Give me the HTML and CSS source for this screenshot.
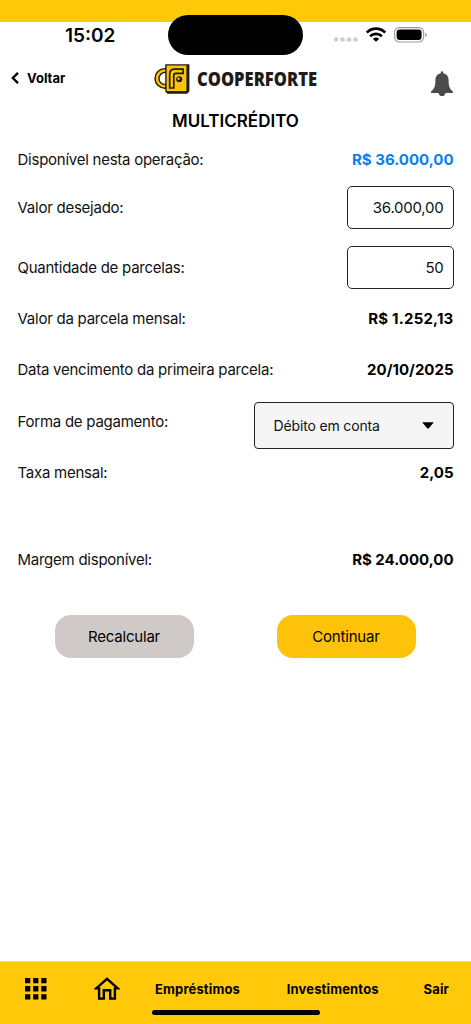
FILE: index.html
```html
<!DOCTYPE html>
<html lang="pt-BR">
<head>
<meta charset="utf-8">
<title>Multicrédito</title>
<link rel="stylesheet" href="styles.css">
</head>
<body>
<div class="app">
  <div class="status">
    <span class="island"></span>
    <span class="clock">15:02</span>
    <span class="indicators">
      <svg class="dots" width="24" height="5" viewBox="0 0 24 5" fill="#ccc"><rect x="0" y=".4" width="4.2" height="4.2" rx="1.4"/><rect x="6.5" y=".4" width="4.2" height="4.2" rx="1.4"/><rect x="12.9" y=".4" width="4.2" height="4.2" rx="1.4"/><rect x="19.4" y=".4" width="4.2" height="4.2" rx="1.4"/></svg>
      <svg class="wifi" width="20" height="15" viewBox="0 0 20 15" fill="none" stroke="#000" stroke-width="2.7"><path d="M.8 5.6C6 .4 14 .4 19.2 5.6"/><path d="M4.1 9.2C7.4 6 12.6 6 15.9 9.2"/><path d="M6.8 11.7Q10 9.2 13.2 11.7L10 14.8Z" fill="#000" stroke="none"/></svg>
      <svg class="battery" width="34" height="16" viewBox="0 0 34 16"><rect x=".6" y=".6" width="29" height="14.4" rx="4.8" fill="#fff" stroke="#999" stroke-width="1.1"/><rect x="2.6" y="2.6" width="25" height="10.4" rx="3.2"/><path d="M31 5.5q1.8.6 1.8 2.3t-1.8 2.3z" fill="#aaa"/></svg>
    </span>
  </div>

  <header class="header">
    <a class="back"><svg width="8" height="12" viewBox="0 0 8 12" fill="none" stroke="#000" stroke-width="2.4"><path d="M7 .8L1.8 6 7 11.2"/></svg>Voltar</a>
    <div class="brand">
      <svg width="36" height="31" viewBox="0 0 36 31">
        <path d="M12 4.6h-1.2a9.8 9.8 0 0 0 0 19.6H12v-3.8h-1a6 6 0 0 1 0-12h1z" fill="#fdc500" stroke="#211b18" stroke-width="1.4"/>
        <path d="M11.2.3h24.2v27l-2.2 2.5H13.5l-2.3-2.2z" fill="#211b18"/>
        <path d="M12.6 1.5h19.8v25.6H12.6z" fill="#fdc500"/>
        <path d="M15.7 24V10.2q0-5 5-5h8.4v4.1h-7.3q-2 0-2 2V24z" fill="#fdc500" stroke="#211b18" stroke-width="1.7"/>
        <circle cx="25.2" cy="15.2" r="3" fill="#211b18"/><circle cx="24.6" cy="14.8" r="1.2" fill="#fdc500"/>
      </svg>
      <svg class="wordmark" width="128" height="36" viewBox="0 0 128 36"><text class="wordmark-text" x="1" y="24" textLength="120" lengthAdjust="spacingAndGlyphs">COOPERFORTE</text></svg>
    </div>
    <svg class="bell" width="24" height="26" viewBox="0 0 24 26" fill="#4b4b4b"><path d="M12 .3c.7 0 1.2.6 1.2 1.4v.6c3.8.8 5.4 3.4 5.4 7 0 6 1.2 8.8 4.3 11.2.6.5.4 1.4-.5 1.4H1.6c-.9 0-1.1-.9-.5-1.4 3.1-2.4 4.3-5.2 4.3-11.2 0-3.6 1.6-6.2 5.4-7v-.6c0-.8.5-1.4 1.2-1.4z"/><path d="M8.6 21.7h6.8q-.3 3.4-3.4 3.4t-3.4-3.4z"/></svg>
  </header>

  <h1 class="title">MULTICRÉDITO</h1>

  <main class="form">
    <div class="row row-available"><span>Disponível nesta operação:</span><strong class="value highlight">R$ 36.000,00</strong></div>
    <div class="row row-amount"><span>Valor desejado:</span><span class="field">36.000,00</span></div>
    <div class="row row-count"><span>Quantidade de parcelas:</span><span class="field">50</span></div>
    <div class="row row-monthly"><span>Valor da parcela mensal:</span><strong class="value">R$ 1.252,13</strong></div>
    <div class="row row-due"><span>Data vencimento da primeira parcela:</span><strong class="value">20/10/2025</strong></div>
    <div class="row row-payment"><span class="payment-label">Forma de pagamento:</span><span class="select">Débito em conta<svg width="12" height="7" viewBox="0 0 12 7"><path d="M1 .3h10q.8 0 .3.7L7 6q-1 1-2 0L.7 1Q.2.3 1 .3z"/></svg></span></div>
    <div class="row row-rate"><span>Taxa mensal:</span><strong class="value">2,05</strong></div>
    <div class="row row-margin"><span>Margem disponível:</span><strong class="value">R$ 24.000,00</strong></div>
    <div class="actions"><button class="button secondary">Recalcular</button><button class="button primary">Continuar</button></div>
  </main>

  <nav class="nav">
    <svg class="grid-icon" width="22" height="22" viewBox="0 0 22 22"><path d="M0 0h5.3v5.3H0zM8.1 0h5.3v5.3H8.1zM16.2 0h5.3v5.3h-5.3zM0 8.1h5.3v5.3H0zM8.1 8.1h5.3v5.3H8.1zM16.2 8.1h5.3v5.3h-5.3zM0 16.2h5.3v5.3H0zM8.1 16.2h5.3v5.3H8.1zM16.2 16.2h5.3v5.3h-5.3z"/></svg>
    <svg class="home-icon" width="26" height="23" viewBox="0 0 26 23" fill="none" stroke="#000" stroke-width="2.4"><path d="M2.2 11.4L13 1.8l10.8 9.6h-2.9v10.2h-4.7v-8.4H9.8v8.4H5.1V11.4z"/></svg>
    <span class="nav-loans">Empréstimos</span>
    <span class="nav-investments">Investimentos</span>
    <span class="nav-exit">Sair</span>
    <span class="home-indicator"></span>
  </nav>
</div>
</body>
</html>
```
FILE: styles.css
```css
* { box-sizing: border-box; }
body { margin: 0; background: #fff; color: #111; font-family: Inter, "Liberation Sans", sans-serif; font-size: 15px; }
svg { display: block; flex: none; }
.app { width: 471px; height: 1024px; display: flex; flex-direction: column; }
.status { position: relative; height: 57px; border-top: 22px solid #ffc90a; display: flex; align-items: flex-start; justify-content: space-between; padding: 0 43px 0 65px; }
.island { position: absolute; left: 168px; top: -7px; width: 135px; height: 40px; border-radius: 20px; background: #000; }
.clock { font-size: 19px; font-weight: 600; line-height: 28px; color: #000; }
.indicators { display: flex; align-items: flex-start; padding-top: 5px; }
.dots { margin: 10px 8px 0 0; }
.wifi { margin-right: 8px; }
.header { height: 45px; display: flex; align-items: flex-start; padding-left: 11px; }
.back { display: flex; align-items: center; gap: 8px; width: 143px; height: 42px; font-size: 13px; font-weight: 700; color: #000; }
.brand { display: flex; align-items: flex-start; padding-top: 5px; width: 276px; }
.brand > svg:first-child { margin-top: 2px; }
.wordmark { margin-left: 6px; }
.wordmark-text { font-family: "Open Sans", sans-serif; font-size: 19px; font-weight: 800; fill: #211b18; }
.bell { margin-top: 14px; }
.title { margin: 0; height: 39px; line-height: 38px; text-align: center; font-size: 17px; font-weight: 600; color: #000; }
.form { flex: 1; padding: 0 17.5px; letter-spacing: -0.25px; }
.row { display: flex; align-items: center; justify-content: space-between; }
.row-available { height: 37px; padding-bottom: 1px; }
.row-amount { height: 59px; }
.row-count { height: 61px; }
.row-monthly { height: 41px; }
.row-due { height: 62px; padding-bottom: 2px; }
.row-payment { height: 49px; }
.row-rate { height: 46px; padding-bottom: 2px; }
.row-margin { height: 42px; margin-top: 42px; }
.value { font-weight: 700; color: #000; letter-spacing: 0; }
.row-monthly .value { letter-spacing: 0.2px; }
.highlight { color: #087ff5; }
.field { width: 107px; height: 43px; border: 1.5px solid #222; border-radius: 5px; padding: 0 9px; line-height: 41px; text-align: right; }
.payment-label { padding-bottom: 8px; }
.select { display: flex; align-items: center; justify-content: space-between; width: 200px; height: 47px; border: 1.5px solid #222; border-radius: 4px; background: #f5f5f5; padding: 0 19px; font-size: 14px; letter-spacing: -0.15px; }
.actions { display: flex; justify-content: space-between; padding: 35px 38px 0 37px; }
.button { width: 139px; height: 43px; border: 0; border-radius: 16px; padding: 0; font: inherit; letter-spacing: -0.2px; color: #000; }
.secondary { background: #cfc9c7; }
.primary { background: #ffc20a; }
.nav { position: relative; height: 63px; border-top: 1px solid #f3dc94; background: #ffc90a; display: flex; align-items: center; padding: 0 22px 9px 25px; font-size: 13px; font-weight: 700; letter-spacing: 0.15px; color: #000; }
.home-icon { margin-left: 47px; }
.nav-loans { margin-left: 35px; width: 132px; }
.nav-investments { width: 137px; }
.home-indicator { position: absolute; left: 152px; bottom: 9px; width: 168px; height: 5px; border-radius: 3px; background: #000; }
```
